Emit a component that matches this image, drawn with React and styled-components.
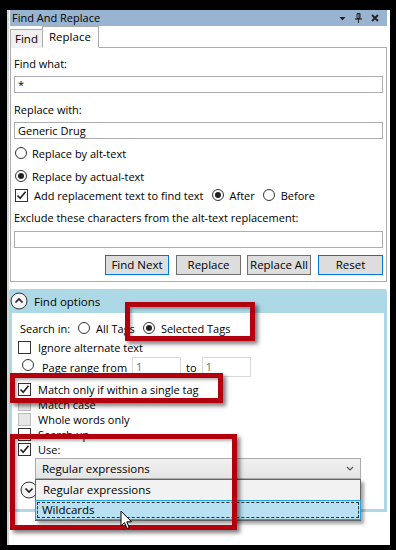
import React from 'react';
import styled, { createGlobalStyle } from 'styled-components';

const GlobalStyle = createGlobalStyle`
  html, body {
    margin: 0;
    padding: 0;
    background: #000;
  }
  body {
    font-family: "Segoe UI", "Open Sans", "Noto Sans", sans-serif;
    font-size: 11px;
    color: #000;
  }
  * { box-sizing: border-box; }
`;

const Frame = styled.div`
  position: relative;
  width: 396px;
  height: 550px;
  padding: 10px 6px 5px 7px;
  background: #000;
  overflow: hidden;
`;

const Window = styled.div`
  height: 100%;
  background: #fff;
  border-left: 2px solid #d6d6d6;
  padding: 0 3px 0 1px;
  display: flex;
  flex-direction: column;
`;

const TitleBar = styled.div`
  height: 16px;
  background: #99b4d1;
  display: flex;
  align-items: center;
  padding: 0 8px 0 2px;
  line-height: 16px;
`;

const TitleText = styled.span`
  flex: 1;
`;

const TitleIcons = styled.div`
  display: flex;
  align-items: center;
  gap: 9px;
`;

const TabStrip = styled.div`
  height: 22px;
  display: flex;
  align-items: flex-end;
  position: relative;
  z-index: 1;
  margin-bottom: -1px;
`;

const Tab = styled.div`
  height: ${(p) => (p.$active ? 22 : 19)}px;
  width: ${(p) => p.$width}px;
  padding-left: ${(p) => (p.$active ? 6 : 4)}px;
  background: ${(p) => (p.$active ? '#fff' : '#f0f0f0')};
  border: 1px solid #acacac;
  border-bottom: ${(p) => (p.$active ? '1px solid #fff' : 'none')};
  margin-left: ${(p) => (p.$active ? -1 : 0)}px;
  line-height: ${(p) => (p.$active ? 19 : 17)}px;
  font-size: 11.5px;
`;

const TabPanel = styled.div`
  border: 1px solid #acacac;
  padding: 8px 3px 6px 3px;
  display: flex;
  flex-direction: column;
`;

const Label = styled.div`
  height: 16px;
  line-height: 16px;
  margin-top: ${(p) => p.$top || 0}px;
`;

const TextBox = styled.div`
  height: ${(p) => p.$h || 17}px;
  margin-top: ${(p) => p.$top || 0}px;
  border: 1px solid #abadb3;
  padding-left: 3px;
  line-height: 15px;
  background: #fff;
`;

const Row = styled.div`
  display: flex;
  align-items: center;
  height: ${(p) => p.$h || 16}px;
  margin-top: ${(p) => p.$top || 0}px;
  margin-left: ${(p) => p.$left || 0}px;
`;

const RadioCircle = styled.span`
  width: 12px;
  height: 12px;
  border-radius: 50%;
  border: 1px solid #333;
  background: #fff;
  display: inline-flex;
  align-items: center;
  justify-content: center;
  flex: none;
  margin-left: ${(p) => p.$left || 0}px;
  margin-right: ${(p) => p.$gap || 5}px;
  margin-bottom: ${(p) => p.$lift || 0}px;

  &::after {
    content: '';
    width: 6px;
    height: 6px;
    border-radius: 50%;
    background: ${(p) => (p.$checked ? '#222' : 'transparent')};
  }
`;

const Box = styled.span`
  width: 13px;
  height: 13px;
  border: 1px solid ${(p) => (p.$disabled ? '#bcbcbc' : '#333')};
  background: ${(p) => (p.$disabled ? '#e6e6e6' : '#fff')};
  display: inline-flex;
  align-items: center;
  justify-content: center;
  flex: none;
  margin-left: ${(p) => p.$left || 0}px;
  margin-right: ${(p) => p.$gap || 6}px;
`;

const ButtonRow = styled.div`
  display: flex;
  justify-content: flex-end;
  margin-top: 7px;
  gap: 6px;
`;

const Button = styled.div`
  width: ${(p) => p.$w}px;
  height: 20px;
  margin-left: ${(p) => p.$left || 0}px;
  border: 1px solid ${(p) => (p.$default ? '#0078d7' : '#707070')};
  background: #dddddd;
  text-align: center;
  line-height: 18px;
  font-size: 11.5px;
`;

const Expander = styled.div`
  margin-top: 7px;
  margin-left: -1px;
  background: #add8e6;
  border-radius: 3px 3px 0 0;
  padding: 0 3px 3px 3px;
`;

const ExpanderHeader = styled.div`
  height: 24px;
  display: flex;
  align-items: center;
  margin-left: -2px;
  font-size: 11.5px;
`;

const ExpanderBody = styled.div`
  background: #fff;
  padding: 7px 0 11px 6px;
  display: flex;
  flex-direction: column;
`;

const Spacer = styled.span`
  display: inline-block;
  width: ${(p) => p.$w}px;
  flex: none;
`;

const SmallInput = styled.div`
  width: 49px;
  height: 20px;
  border: 1px solid #d9d9d9;
  color: #6d6d6d;
  padding-left: 3px;
  line-height: 18px;
  flex: none;
`;

const Combo = styled.div`
  margin: 1px 0 0 17px;
  width: 326px;
  height: 21px;
  border: 1px solid #acacac;
  background: linear-gradient(#f0f0f0, #e5e5e5);
  display: flex;
  align-items: center;
  justify-content: space-between;
  padding: 0 6px 0 6px;
  font-size: 11.5px;
`;

const Popup = styled.div`
  position: absolute;
  left: 35px;
  top: 479px;
  width: 326px;
  height: 42px;
  background: #f2f2f2;
  border: 1px solid #646464;
  box-shadow: 3px 3px 3px rgba(0, 0, 0, 0.35);
  font-size: 11.5px;
`;

const PopupItem = styled.div`
  height: 20px;
  line-height: 18px;
  padding-left: 6px;
  border: 1px solid ${(p) => (p.$hover ? '#26a0da' : 'transparent')};
  background: ${(p) => (p.$hover ? '#b9e0f3' : 'transparent')};
  margin: ${(p) => (p.$hover ? '0 -1px -1px -1px' : '0')};
  position: relative;

  &::after {
    content: '';
    position: absolute;
    inset: 1px;
    border: 1px dashed ${(p) => (p.$hover ? '#333' : 'transparent')};
  }
`;

const RedBox = styled.div`
  position: absolute;
  left: ${(p) => p.$x}px;
  top: ${(p) => p.$y}px;
  width: ${(p) => p.$w}px;
  height: ${(p) => p.$h}px;
  border: 5px solid #b3000f;
  box-shadow: 3px 3px 4px rgba(0, 0, 0, 0.5), inset 2px 2px 3px rgba(0, 0, 0, 0.3);
  pointer-events: none;
`;

const Cursor = styled.svg`
  position: absolute;
  left: 120px;
  top: 510px;
`;

function Radio({ checked, left, gap, lift }) {
  return <RadioCircle $checked={checked} $left={left} $gap={gap} $lift={lift} />;
}

function Check({ checked, disabled, left, gap }) {
  return (
    <Box $disabled={disabled} $left={left} $gap={gap}>
      {checked && (
        <svg width="11" height="11" viewBox="0 0 11 11">
          <path d="M1.5 5.5 L4.2 8.3 L9.5 1.8" fill="none" stroke="#222" strokeWidth="1.6" />
        </svg>
      )}
    </Box>
  );
}

function ChevronCircle({ up, left = 0 }) {
  return (
    <svg width="18" height="18" viewBox="0 0 18 18" style={{ marginLeft: left, flex: 'none' }}>
      <circle cx="9" cy="9" r="8" fill="#f4f4f4" stroke="#333" strokeWidth="1" />
      <path
        d={up ? 'M5.5 10.5 L9 7 L12.5 10.5' : 'M5.5 7.5 L9 11 L12.5 7.5'}
        fill="none"
        stroke="#222"
        strokeWidth="1.7"
      />
    </svg>
  );
}

export default function App() {
  return (
    <>
      <GlobalStyle />
      <Frame>
        <Window>
          <TitleBar>
            <TitleText>Find And Replace</TitleText>
            <TitleIcons>
              <svg width="7" height="5" viewBox="0 0 7 5">
                <path d="M0.5 1 L6.5 1 L3.5 4.5 Z" fill="#222" />
              </svg>
              <svg width="7" height="10" viewBox="0 0 7 10">
                <path d="M2 0.5 H5 V5.5 H2 Z" fill="none" stroke="#222" strokeWidth="1" />
                <path d="M4 1 V5" stroke="#222" strokeWidth="1" />
                <path d="M0 6 H7" stroke="#222" strokeWidth="1.2" />
                <path d="M3.5 6 V10" stroke="#222" strokeWidth="1" />
              </svg>
              <svg width="8" height="8" viewBox="0 0 8 8">
                <path d="M1 1 L7 7 M7 1 L1 7" stroke="#222" strokeWidth="1.8" />
              </svg>
            </TitleIcons>
          </TitleBar>

          <TabStrip>
            <Tab $width={33}>Find</Tab>
            <Tab $width={57} $active>
              Replace
            </Tab>
          </TabStrip>

          <TabPanel>
            <Label>Find what:</Label>
            <TextBox $top={4}>*</TextBox>
            <Label $top={9}>Replace with:</Label>
            <TextBox $top={4}>Generic Drug</TextBox>
            <Row $top={6}>
              <Radio left={1} />
              Replace by alt-text
            </Row>
            <Row $top={7}>
              <Radio left={1} checked />
              Replace by actual-text
            </Row>
            <Row $top={3}>
              <Check left={1} checked />
              Add replacement text to find text
              <Spacer $w={8} />
              <Radio checked gap={6} />
              After
              <Spacer $w={8} />
              <Radio gap={6} />
              Before
            </Row>
            <Label $top={7}>Exclude these characters from the alt-text replacement:</Label>
            <TextBox $top={5} />
            <ButtonRow>
              <Button $w={64} $default>
                Find Next
              </Button>
              <Button $w={65} $left={1}>
                Replace
              </Button>
              <Button $w={64}>Replace All</Button>
              <Button $w={65} $left={1} $default>
                Reset
              </Button>
            </ButtonRow>
          </TabPanel>

          <Expander>
            <ExpanderHeader>
              <ChevronCircle up />
              <Spacer $w={6} />
              Find options
            </ExpanderHeader>
            <ExpanderBody>
              <Row $left={2}>
                Search in:
                <Spacer $w={8} />
                <Radio gap={6} />
                All Tags
                <Spacer $w={8} />
                <Radio gap={6} checked />
                Selected Tags
              </Row>
              <Row $top={3}>
                <Check gap={7} />
                Ignore alternate text
              </Row>
              <Row $top={2} $h={20}>
                <Radio left={4} gap={8} lift={5} />
                Page range from
                <Spacer $w={5} />
                <SmallInput>1</SmallInput>
                <Spacer $w={5} />
                to
                <Spacer $w={5} />
                <SmallInput>1</SmallInput>
              </Row>
              <Row $top={5} $h={15}>
                <Check gap={7} checked />
                Match only if within a single tag
              </Row>
              <Row $h={15}>
                <Check gap={7} disabled />
                Match case
              </Row>
              <Row $h={15}>
                <Check gap={7} disabled />
                Whole words only
              </Row>
              <Row $h={15}>
                <Check gap={7} />
                Search up
              </Row>
              <Row $h={15}>
                <Check gap={7} checked />
                Use:
              </Row>
              <Combo>
                Regular expressions
                <svg width="8" height="5" viewBox="0 0 8 5">
                  <path d="M1 1 L4 4 L7 1" fill="none" stroke="#555" strokeWidth="1.2" />
                </svg>
              </Combo>
              <Row $top={2} $h={17}>
                <ChevronCircle left={2} />
              </Row>
            </ExpanderBody>
          </Expander>
        </Window>

        <Popup>
          <PopupItem>Regular expressions</PopupItem>
          <PopupItem $hover>Wildcards</PopupItem>
        </Popup>

        <RedBox $x={125} $y={302} $w={130} $h={39} />
        <RedBox $x={10} $y={373} $w={213} $h={30} />
        <RedBox $x={10} $y={434} $w={227} $h={96} />

        <Cursor width="13" height="20" viewBox="0 0 13 20">
          <path
            d="M1 1 L1 16 L4.5 12.5 L7 18.5 L9.2 17.6 L6.8 11.8 L11.5 11.8 Z"
            fill="#fff"
            stroke="#000"
            strokeWidth="1"
            strokeLinejoin="round"
          />
        </Cursor>
      </Frame>
    </>
  );
}
